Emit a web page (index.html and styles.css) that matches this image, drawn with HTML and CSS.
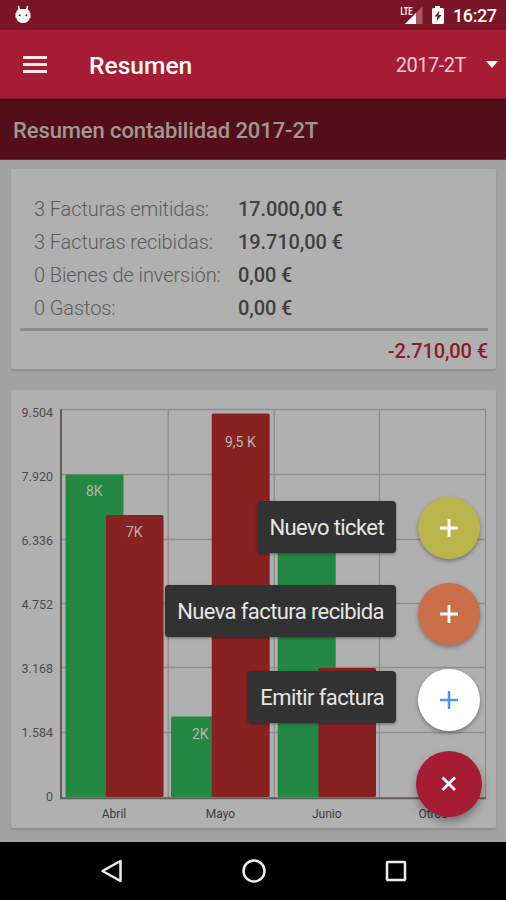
FILE: index.html
```
<!DOCTYPE html>
<html lang="es">
<head>
    <meta charset="UTF-8">
    <meta name="viewport" content="width=device-width, initial-scale=1.0">
    <title>Resumen</title>
    <link rel="stylesheet" href="styles.css">
</head>
<body>

    <!-- Status bar -->
    <div class="status-bar">
        <svg class="debug-icon" width="18" height="20" viewBox="0 0 18 20">
            <path d="M4.500 1.500L5.500 5M13.500 1.500L12.500 5" stroke="#fff" stroke-width="1.500" stroke-linecap="round"/>
            <path d="M5 4h8c2 1 2.800 2.500 2.800 4h.7v5h-.8c-.6 3.400-3.200 5-6.700 5S2.900 16.400 2.300 13h-.8V8h.7c0-1.500.8-3 2.800-4z" fill="#fff"/>
            <circle cx="5.700" cy="10.300" r="1" fill="#7b1424"/>
            <circle cx="12.300" cy="10.300" r="1" fill="#7b1424"/>
        </svg>
        <div class="status-right">
            <svg class="signal" width="24" height="20" viewBox="0 0 24 20">
                <path d="M22.500 1.500v17.500H5z" fill="#fff" opacity=".3"/>
                <path d="M16 8v11H5z" fill="#fff"/>
                <rect x="0" y="0" width="13" height="10" fill="#7b1424"/>
                <text x="0.500" y="9.500" class="lte" textLength="12" lengthAdjust="spacingAndGlyphs">LTE</text>
            </svg>
            <svg class="battery" width="14" height="20" viewBox="0 0 14 20">
                <path d="M4 1h5v2h2.500q1.500 0 1.500 1.500v13q0 1.500-1.500 1.500h-9q-1.500 0-1.500-1.500v-13Q1 3 2.500 3H4z" fill="#fff"/>
                <path d="M8.500 5.500L3.500 11.500h3l-1 5 5-6.500h-3z" fill="#7b1424"/>
            </svg>
            <span class="clock">16:27</span>
        </div>
    </div>

    <!-- App bar -->
    <div class="app-bar">
        <div class="menu-icon"><span></span><span></span><span></span></div>
        <h1>Resumen</h1>
        <div class="period">2017-2T</div>
        <div class="caret"></div>
    </div>

    <h2 class="subtitle">Resumen contabilidad 2017-2T</h2>

    <div class="content">
        <!-- Totals -->
        <div class="card summary">
            <div class="row"><span class="label">3 Facturas emitidas:</span><b>17.000,00 €</b></div>
            <div class="row"><span class="label">3 Facturas recibidas:</span><b>19.710,00 €</b></div>
            <div class="row"><span class="label">0 Bienes de inversión:</span><b>0,00 €</b></div>
            <div class="row"><span class="label">0 Gastos:</span><b>0,00 €</b></div>
            <div class="total">-2.710,00 €</div>
        </div>

        <!-- Bar chart -->
        <div class="card">
            <svg class="chart" width="485" height="438" viewBox="11 390 485 438">
                <path class="grid" d="M60 409.500H486M60 474.500H486M60 539.500H486M60 603.500H486M60 667.500H486M60 732.500H486M168.200 409V798M274.200 409V798M379.500 409V798M485.500 409V798"/>
                <path class="axis" d="M61 409.500V798.200H486"/>

                <rect class="in" x="65.500" y="474.500" width="58" height="322.500" rx="1.500"/>
                <rect class="out" x="106" y="515" width="57.500" height="282" rx="1.500"/>
                <rect class="in" x="171" y="716.500" width="58" height="80.500" rx="1.500"/>
                <rect class="out" x="211.700" y="413.500" width="58" height="383.500" rx="1.500"/>
                <rect class="in" x="277.700" y="520" width="58" height="277" rx="1.500"/>
                <rect class="out" x="318.500" y="668" width="57.500" height="129" rx="1.500"/>

                <g class="bar-value">
                    <text x="94.300" y="496">8K</text>
                    <text x="134.300" y="536.500">7K</text>
                    <text x="200.300" y="738.500">2K</text>
                    <text x="240.300" y="447">9,5 K</text>
                </g>
                <g class="y-label">
                    <text x="53" y="416.500">9.504</text>
                    <text x="53" y="480.500">7.920</text>
                    <text x="53" y="544.500">6.336</text>
                    <text x="53" y="608.500">4.752</text>
                    <text x="53" y="672.500">3.168</text>
                    <text x="53" y="736.500">1.584</text>
                    <text x="53" y="800.500">0</text>
                </g>
                <g class="x-label">
                    <text x="114" y="817.500">Abril</text>
                    <text x="220.500" y="817.500">Mayo</text>
                    <text x="326.800" y="817.500">Junio</text>
                    <text x="433" y="817.500">Otros</text>
                </g>
            </svg>
        </div>
    </div>

    <!-- Android navigation -->
    <div class="nav-bar">
        <svg width="24" height="26" viewBox="0 0 24 26"><path d="M20.500 3v20L2.500 13z"/></svg>
        <svg width="26" height="26" viewBox="0 0 26 26"><circle cx="13" cy="13" r="10.500"/></svg>
        <svg width="24" height="26" viewBox="0 0 24 26"><rect x="3" y="4" width="18" height="18" rx=".5"/></svg>
    </div>

    <!-- Floating action menu -->
    <div class="fab-menu">
        <div class="fab-row first">
            <span class="fab-label">Nuevo ticket</span>
            <button class="fab yellow"><svg width="20" height="20" viewBox="0 0 20 20"><path d="M10 1v18M1 10h18"/></svg></button>
        </div>
        <div class="fab-row">
            <span class="fab-label">Nueva factura recibida</span>
            <button class="fab orange"><svg width="20" height="20" viewBox="0 0 20 20"><path d="M10 1v18M1 10h18"/></svg></button>
        </div>
        <div class="fab-row">
            <span class="fab-label">Emitir factura</span>
            <button class="fab white"><svg width="20" height="20" viewBox="0 0 20 20"><path d="M10 1v18M1 10h18"/></svg></button>
        </div>
        <button class="fab close"><svg width="20" height="20" viewBox="0 0 20 20"><path d="M3.500 3.500l12.500 12.500M16 3.500L3.500 16"/></svg></button>
    </div>

</body>
</html>
```
FILE: styles.css
```
* {
    box-sizing: border-box;
}

body {
    margin: 0;
    width: 506px;
    height: 900px;
    display: flex;
    flex-direction: column;
    position: relative;
    overflow: hidden;
    font-family: Roboto, sans-serif;
    background: #a2a2a2;
}

/* Status bar */
.status-bar {
    height: 30px;
    flex: none;
    display: flex;
    justify-content: space-between;
    padding: 5px 9px 0 14px;
    background: #7b1424;
}

.status-right {
    display: flex;
}

.battery {
    margin-left: 7px;
}

.lte {
    font-size: 10px;
    font-weight: bold;
    fill: #fff;
}

.clock {
    margin-left: 8px;
    width: 44px;
    font-size: 18px;
    line-height: 22px;
    font-weight: 500;
    letter-spacing: -0.4px;
    color: #fff;
    white-space: nowrap;
}

/* App bar */
.app-bar {
    height: 69px;
    flex: none;
    display: flex;
    align-items: center;
    padding: 0 8px 0 23px;
    background: #a51c34;
    border-bottom: 1px solid #7b1628;
    color: #fff;
}

.menu-icon {
    width: 24px;
    display: flex;
    flex-direction: column;
    gap: 4px;
}

.menu-icon span {
    height: 3px;
    background: #fbe9ec;
}

h1 {
    margin: 2px 0 0 42px;
    font-size: 24.6px;
    font-weight: 500;
    flex: 1;
}

.period {
    margin-top: 2px;
    font-size: 20px;
    letter-spacing: -0.5px;
    color: #f4cfd3;
}

.caret {
    margin-left: 20px;
    border: 6px solid transparent;
    border-top: 7px solid #fff;
    border-bottom: 0;
}

.subtitle {
    height: 61px;
    flex: none;
    margin: 0;
    padding-left: 13px;
    font-size: 22px;
    font-weight: 500;
    letter-spacing: -0.1px;
    line-height: 63px;
    color: #a09890;
    background: linear-gradient(#450b14, #540e1a 5px);
    border-bottom: 1px solid #6b2a35;
}

/* Cards */
.content {
    flex: 1;
    display: flex;
    flex-direction: column;
    gap: 21px;
    padding: 9px 10px 0 11px;
    background: #a2a2a2;
}

.card {
    flex: none;
    border-radius: 2px;
    background: #b0b0b0;
    box-shadow: 0 2px 2px rgba(0, 0, 0, 0.13);
}

.summary {
    height: 200px;
    padding: 23px 8px 0 9px;
}

.row {
    display: flex;
    height: 33px;
    padding-left: 14px;
    font-size: 20px;
    line-height: 34px;
    letter-spacing: -0.1px;
    color: #3f3f3f;
}

.label {
    width: 204px;
    font-weight: 300;
    color: #5c5c5c;
}

.row b {
    font-weight: 500;
}

.total {
    margin-top: 4px;
    border-top: 3px solid #8b8b8b;
    font-size: 20px;
    font-weight: 500;
    line-height: 40px;
    letter-spacing: -0.1px;
    text-align: right;
    color: #8e1a22;
}

/* Chart */
.chart {
    display: block;
}

.grid {
    fill: none;
    stroke: #908e8b;
    stroke-width: 1.3;
}

.axis {
    fill: none;
    stroke: #665c57;
    stroke-width: 2;
}

.in {
    fill: #228843;
}

.out {
    fill: #872122;
}

.bar-value {
    font-size: 14px;
    text-anchor: middle;
    fill: #b9b5ad;
}

.y-label {
    font-size: 12.5px;
    text-anchor: end;
    fill: #4c4c4c;
}

.x-label {
    font-size: 12px;
    text-anchor: middle;
    fill: #3c3c3c;
}

/* Bottom navigation */
.nav-bar {
    height: 58px;
    flex: none;
    display: flex;
    justify-content: space-between;
    align-items: center;
    padding: 0 98px 0 100px;
    background: #000;
}

.nav-bar svg {
    fill: none;
    stroke: #eee;
    stroke-width: 2.5;
    stroke-linejoin: round;
}

/* Floating buttons, drawn over the page */
.fab-menu {
    position: absolute;
    right: 24px;
    top: 497px;
    display: flex;
    flex-direction: column;
    align-items: flex-end;
}

.fab-row {
    display: flex;
    align-items: center;
    height: 62px;
    margin: 0 2px 24px 0;
}

.fab-row:nth-child(3) {
    margin-bottom: 20px;
}

.fab-label {
    height: 52px;
    margin: 0 22px 6px 0;
    padding: 0 12px;
    border-radius: 4px;
    background: #323232;
    color: #e6e6e6;
    font-size: 22px;
    letter-spacing: -0.6px;
    line-height: 54px;
    box-shadow: 0 1px 3px rgba(0, 0, 0, 0.4);
}

.first .fab-label {
    margin-bottom: 2px;
}

.fab {
    width: 62px;
    height: 62px;
    padding: 0;
    border: none;
    border-radius: 50%;
    display: flex;
    align-items: center;
    justify-content: center;
    box-shadow: 0 2px 4px rgba(0, 0, 0, 0.35);
}

.fab path {
    stroke: #fff;
    stroke-width: 2.8;
}

.yellow {
    background: #b9b54a;
}

.orange {
    background: #cb6e4a;
}

.white {
    background: #fff;
}

.white path {
    stroke: #4a98ee;
    stroke-width: 2.5;
}

.close {
    width: 66px;
    height: 66px;
    background: #a51c34;
    box-shadow: 0 5px 9px rgba(0, 0, 0, 0.35);
}
```
